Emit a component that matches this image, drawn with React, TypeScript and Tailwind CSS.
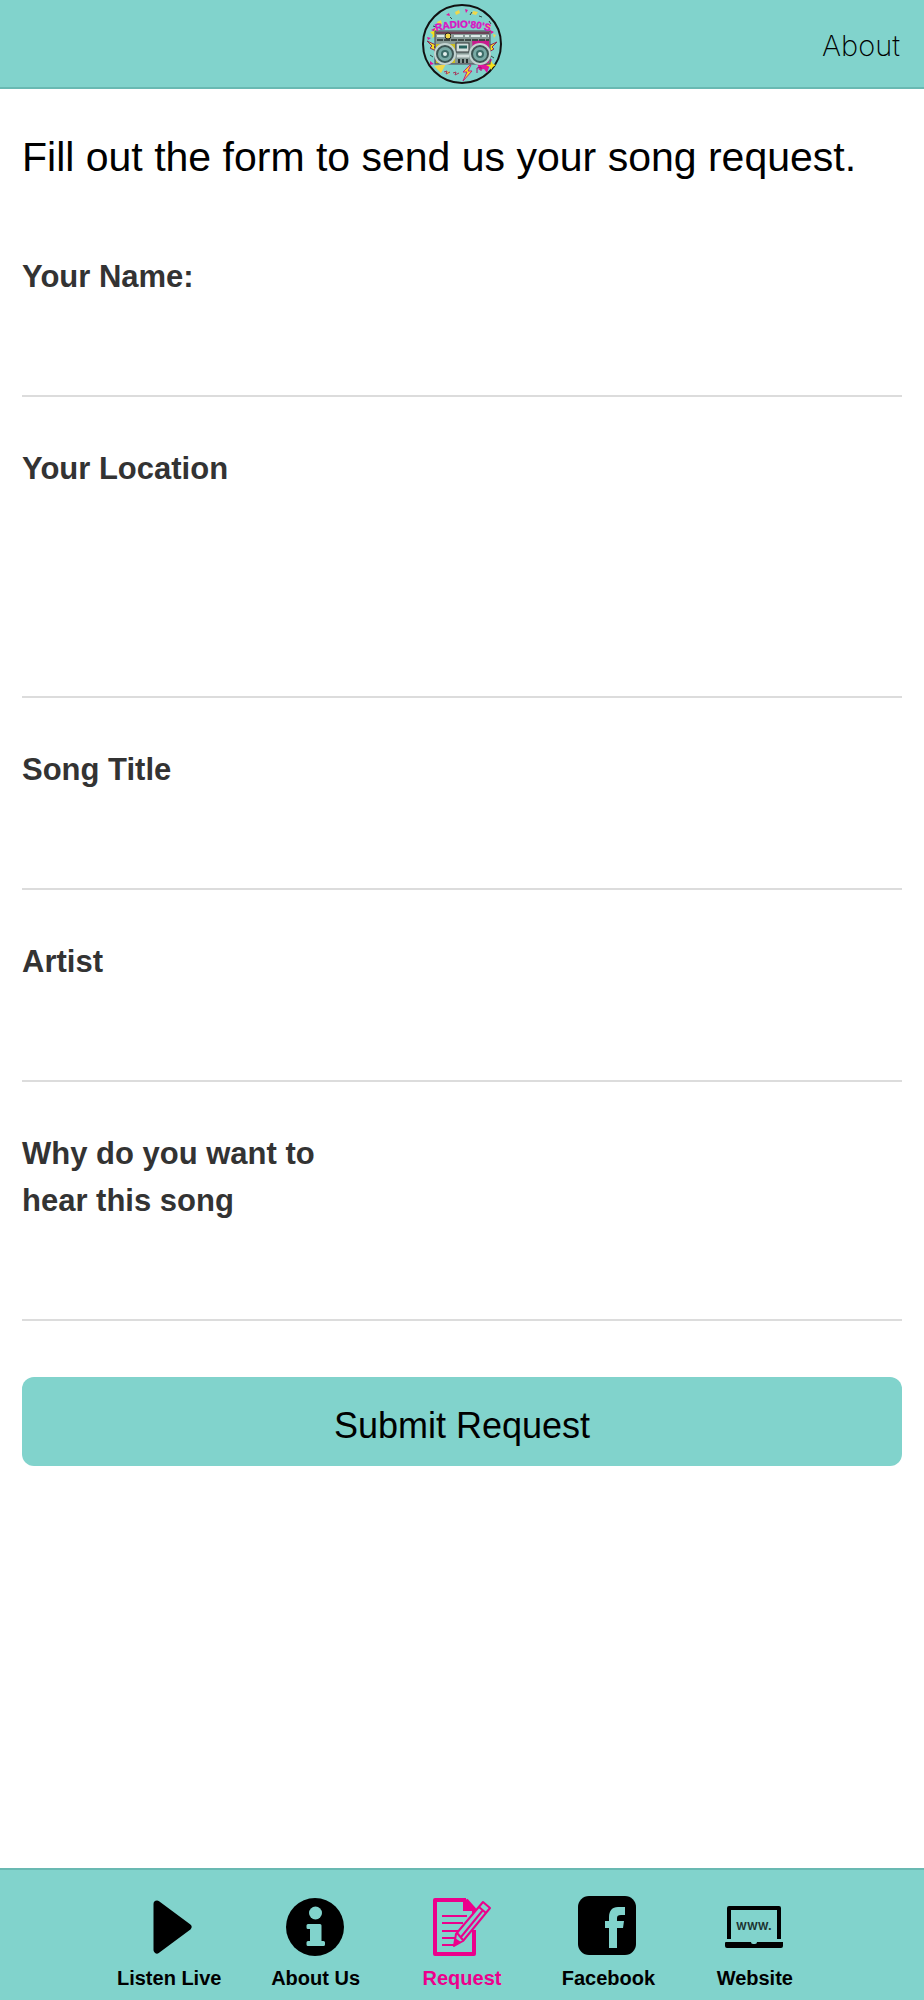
import { useState } from "react";
import type { ReactNode } from "react";

type Field = {
  id: string;
  label: string;
  multiline?: boolean;
};

type Tab = {
  label: string;
  icon: ReactNode;
};

const fields: Field[] = [
  { id: "name", label: "Your Name:" },
  { id: "location", label: "Your Location", multiline: true },
  { id: "title", label: "Song Title" },
  { id: "artist", label: "Artist" },
  { id: "reason", label: "Why do you want to hear this song" },
];

const PlayIcon = () => (
  <svg viewBox="0 0 60 60" className="size-[60px]" fill="currentColor" aria-hidden="true">
    <path
      d="M18 8 L49 31 L18 54 Z"
      stroke="currentColor"
      strokeWidth="7"
      strokeLinejoin="round"
    />
  </svg>
);

const InfoIcon = () => (
  <svg viewBox="0 0 60 60" className="size-[60px]" fill="currentColor" aria-hidden="true">
    <circle cx="29" cy="31" r="29" />
    <g fill="#81d3cc">
      <circle cx="29.500" cy="17" r="6.500" />
      <path d="M22 28h12q1.500 0 1.500 1.500V45h2q1.500 0 1.500 1.500v2q0 1.500-1.500 1.500H22q-1.500 0-1.500-1.500v-2q0-1.500 1.500-1.500h2V33h-2q-1.500 0-1.500-1.500v-2q0-1.500 1.500-1.500z" />
    </g>
  </svg>
);

const RequestIcon = () => (
  <svg viewBox="0 0 60 60" className="size-[60px]" fill="none" stroke="currentColor" aria-hidden="true">
    <path d="M34 4H3v54h39V34M34 4l8 9v6" strokeWidth="4" strokeLinejoin="round" />
    <path d="M31 3h3l8 9v3H31z" fill="currentColor" stroke="none" />
    <path d="M10 20h25M10 27h21M10 35h17M10 42h14M10 49h13" strokeWidth="2" />
    <path d="M51 6l7 6-27 33-9 5 2-12z" fill="#81d3cc" strokeWidth="2" strokeLinejoin="round" />
    <path d="M47 11l7 6M29 41l22-27M25 37l6 7" strokeWidth="2" />
    <path d="M23 42l6 4-7 4z" fill="currentColor" stroke="none" />
  </svg>
);

const FacebookIcon = () => (
  <svg viewBox="0 0 60 60" className="size-[60px]" fill="currentColor" aria-hidden="true">
    <rect x="0" y="0" width="58" height="59" rx="11" />
    <path
      fill="#81d3cc"
      d="M31 52V32h-4v-7h4v-4c0-6 3-10 9-10h7v8h-4c-3 0-4 1-4 3v3h7l-1 7h-6v20z"
    />
  </svg>
);

const WebsiteIcon = () => (
  <svg viewBox="0 0 60 60" className="size-[60px]" fill="none" stroke="currentColor" aria-hidden="true">
    <path d="M4 43V12h50v31" strokeWidth="4" strokeLinejoin="round" />
    <path
      d="M1 46h25q0 2 2 2h2q2 0 2-2h26v4q0 2-2 2H2q-2 0-2-2v-3q0-1 1-1z"
      fill="currentColor"
      stroke="none"
    />
    <text
      x="29"
      y="34"
      textAnchor="middle"
      fontSize="13"
      fontWeight="600"
      fontFamily="Inter, sans-serif"
      fill="#1b3331"
      stroke="none"
    >
      www.
    </text>
  </svg>
);

const Logo = () => (
  <svg viewBox="0 0 80 80" className="size-20" role="img" aria-label="Radio 80's">
    <circle cx="40" cy="40" r="39" fill="#81d3cc" stroke="#111" strokeWidth="2" />
    <g fill="#f0d84a">
      <path d="M33 8l4-2 1 3-4 2zM51 7l5 1-2 3-4-1zM15 18l4-2 1 4-4 1zM64 20l5 2-2 3-4-2zM71 30l3 1-2 3zM12 62l12-2-5 9zM24 67l4 1-2 3z" />
    </g>
    <g fill="#e0149f">
      <path d="M24 11l3-2 1 3zM43 5l3 1-2 3zM9 26l4-2 1 4zM68 26l4 2-3 2zM5 33l4 1-3 2zM8 57l4 3-4 1zM55 58l15-3-5 14-3-4-5 1z" />
    </g>
    <path d="M28 13l2 2M48 11l2-3M67 17l2 3M14 23l-3-1M57 12l3 1M8 51l3 2M72 54l-3-2" stroke="#354a48" />
    <path d="M8 28l4-1 2-4 2 4 4 1-3 3 1 3-4-2-4 2 1-3z" fill="#f6e21c" />
    <path d="M69 57l2 3 3 1-3 2-2 3-1-3-4-2 4-1z" fill="#f6e21c" />
    <g strokeLinejoin="round">
      <path d="M5 37l9 4-2 2 6 6-10-5 2-2z" fill="#f6e21c" stroke="#8b2858" />
      <path d="M75 38l-9 4 2 2-6 7 10-6-2-2z" fill="#f6e21c" stroke="#8b2858" />
      <path d="M48 61l-7 7h4l-4 9 9-10h-4l3-6z" fill="#f6e21c" stroke="#c91886" />
    </g>
    <rect x="13" y="27" width="55" height="33" fill="#879996" stroke="#4b4050" />
    <path d="M14 40h19v19H14z" fill="#c9bd22" />
    <path d="M50 36h17v23H52z" fill="#c81c8d" />
    <path d="M14 29h53" stroke="#6a4356" strokeWidth="2" />
    <path d="M15 32h52" stroke="#dceae8" strokeWidth="2" strokeDasharray="9 2 4 2" />
    <path d="M15 36h52" stroke="#3d4947" strokeWidth="2" strokeDasharray="6 1" />
    <circle cx="26" cy="32" r="3" fill="#f0d84a" stroke="#222" />
    <rect x="34" y="39" width="13" height="9" fill="#d3dfdd" stroke="#303736" />
    <path d="M37 43h8" stroke="#27625d" strokeWidth="3" />
    <path d="M35 52h12" stroke="#d3dfdd" strokeWidth="3" />
    <path d="M37 55v4M41 55v4M45 55v4" stroke="#273130" strokeWidth="2" />
    {[23, 58].map((x) => (
      <g key={x}>
        <circle cx={x} cy="50" r="10" fill="#3c5553" stroke="#c3d3d1" strokeWidth="2" />
        <circle cx={x} cy="50" r="7" fill="#78aaa5" />
        <circle cx={x} cy="50" r="4" fill="#3c6b67" />
        <circle cx={x} cy="50" r="2" fill="#e4efed" />
      </g>
    ))}
    <path d="M22 68l3-1-1 3 4-2M31 69l3-1-1 3 4-2" stroke="#a43b5e" fill="none" />
    <path d="M55 69v-5l4-1v4" stroke="#a01672" fill="none" />
    <path id="logo-arc" d="M12 28Q40 19 70 28" fill="none" />
    <text
      fill="#d916c4"
      fontFamily="Liberation Sans, sans-serif"
      fontSize="10"
      fontWeight="bold"
      stroke="#d916c4"
      strokeWidth="0.4"
      textAnchor="middle"
    >
      <textPath href="#logo-arc" startOffset="50%">
        RADIO'80'S
      </textPath>
    </text>
  </svg>
);

const tabs: Tab[] = [
  { label: "Listen Live", icon: <PlayIcon /> },
  { label: "About Us", icon: <InfoIcon /> },
  { label: "Request", icon: <RequestIcon /> },
  { label: "Facebook", icon: <FacebookIcon /> },
  { label: "Website", icon: <WebsiteIcon /> },
];

const FormField = ({ id, label, multiline }: Field) => {
  const inputStyle =
    "block w-full resize-none border-b-2 border-[#dcdcdc] bg-transparent text-[31px] outline-none";

  return (
    <div className="pt-12">
      <label
        htmlFor={id}
        className="block w-[35%] text-[31px] leading-[47px] font-bold text-[#333]"
      >
        {label}
      </label>
      {multiline ? (
        <textarea id={id} name={id} className={`${inputStyle} h-[206px]`} />
      ) : (
        <input id={id} name={id} type="text" className={`${inputStyle} h-[97px]`} />
      )}
    </div>
  );
};

export default function App() {
  const [active, setActive] = useState("Request");

  return (
    <div className="flex min-h-screen flex-col bg-white font-['Liberation_Sans',Arial,sans-serif] text-black">
      <header className="grid h-[89px] grid-cols-3 items-center border-b-2 border-[#69b9b2] bg-[#81d3cc] px-6">
        <div className="col-start-2 justify-self-center">
          <Logo />
        </div>
        <a
          href="#about"
          className="justify-self-end pt-1 font-['Inter',sans-serif] text-[29px] font-extralight"
        >
          About
        </a>
      </header>

      <main className="flex-1 px-[22px]">
        <h1 className="pt-11 pb-6 text-[41px] leading-[48px]">
          Fill out the form to send us your song request.
        </h1>
        <form onSubmit={(e) => e.preventDefault()}>
          {fields.map((field) => (
            <FormField key={field.id} {...field} />
          ))}
          <button
            type="submit"
            className="mt-14 h-[89px] w-full rounded-xl bg-[#81d3cc] pt-2 text-4xl"
          >
            Submit Request
          </button>
        </form>
      </main>

      <nav className="border-t-2 border-[#69b9b2] bg-[#81d3cc] pt-[26px] pb-2">
        <div className="mx-auto grid max-w-[732px] grid-cols-5">
          {tabs.map(({ label, icon }) => (
            <a
              key={label}
              href="#"
              onClick={() => setActive(label)}
              className={`flex flex-col items-center gap-2 text-xl leading-7 font-bold ${
                active === label ? "text-[#ec008c]" : "text-black"
              }`}
            >
              {icon}
              {label}
            </a>
          ))}
        </div>
      </nav>
    </div>
  );
}
